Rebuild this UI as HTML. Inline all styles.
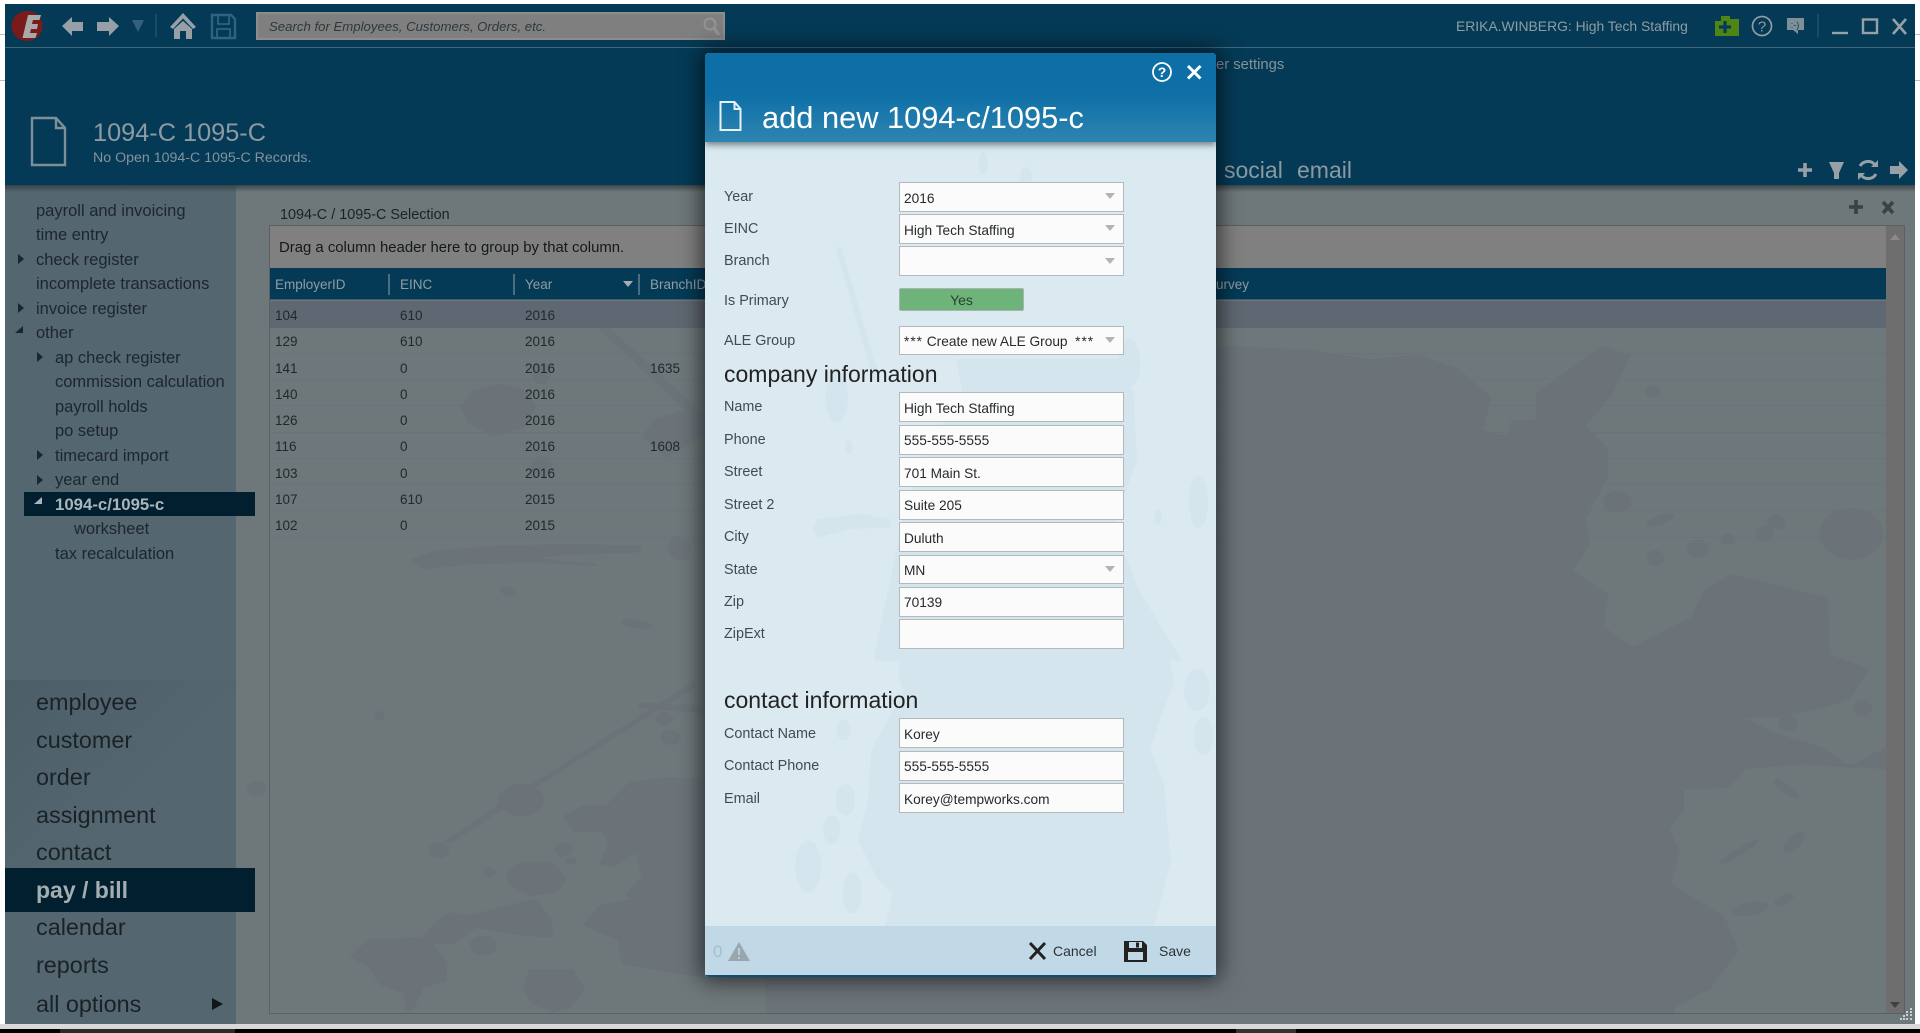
<!DOCTYPE html>
<html><head><meta charset="utf-8"><title>1094-C 1095-C</title>
<style>
html,body{margin:0;padding:0;width:1920px;height:1033px;overflow:hidden;background:#fff;font-family:"Liberation Sans",sans-serif}
div,span{position:absolute;white-space:nowrap;box-sizing:border-box}
svg{position:absolute;overflow:visible}
.n{font-size:16.5px;line-height:24px;height:24px;color:#1c262c;margin-top:1px}
.m{font-size:23.4px;line-height:36px;height:36px;left:36px;color:#1a2226}
.g{font-size:13.5px;line-height:20px;height:20px;color:#1f282c;margin-top:1px}
.h{font-size:13.5px;line-height:20px;height:20px;top:275px;color:#8f9ca3}
.l{font-size:14.4px;line-height:20px;height:20px;left:724px;color:#414c52;margin-top:1px}
.f{left:899px;width:225px;background:#fbfbfb;border:1.5px solid #b4b9bc;font-size:13.7px;color:#252a2c;padding-left:4px;line-height:31px}
.a{left:205px;top:0;width:0;height:0;border-left:5px solid transparent;border-right:5px solid transparent;border-top:6px solid #b0b4b6}
.r{left:269px;width:1617px;height:26.3px;border-bottom:1px solid #69737a}
.sec{left:724px;font-size:23px;line-height:30px;height:30px;color:#222}
</style></head><body>

<!-- window chrome strips -->
<div style="left:0;top:1029px;width:1920px;height:4px;background:#000"></div>
<div style="left:60px;top:1029px;width:175px;height:4px;background:#2b2b2b"></div>
<div style="left:1236px;top:1029px;width:60px;height:4px;background:#333"></div>
<div style="left:0;top:1024px;width:1920px;height:5px;background:#d9d9d9"></div>
<div style="left:0;top:34px;width:5px;height:1px;background:#bbb"></div>
<div style="left:0;top:80px;width:5px;height:1px;background:#bbb"></div>
<div style="left:1915px;top:34px;width:5px;height:1px;background:#bbb"></div>
<div style="left:1915px;top:80px;width:5px;height:1px;background:#bbb"></div>

<!-- header -->
<div style="left:5px;top:4px;width:1910px;height:181px;background:#053a56"></div>
<div style="left:5px;top:47px;width:1910px;height:1px;background:#40697f"></div>

<!-- main area -->
<div style="left:236px;top:185px;width:1679px;height:839px;background:#6e7779"></div>

<!-- sidebar -->
<div style="left:5px;top:185px;width:231px;height:839px;background:#546670"></div>
<div style="left:5px;top:680px;width:231px;height:344px;background:linear-gradient(135deg,#4c5f69,#546670 45%)"></div>

<!-- group panel -->
<div style="left:269px;top:226px;width:1617px;height:42px;background:#808080"></div>
<!-- grid header -->
<div style="left:269px;top:268px;width:1617px;height:32px;background:#053a56;border-bottom:1px solid #3b5f72"></div>

<!-- splatter in main area -->
<svg style="left:0;top:0" width="1920" height="1033" viewBox="0 0 1920 1033">
<g fill="#6b7379" stroke="#6b7379" stroke-width="6" stroke-linejoin="round">
 <g transform="translate(1216,300) scale(.449,.4677)">
  <path d="M0,100L220,110L340,130L450,120L540,150L610,210L590,280L650,295L660,260L715,260L715,200L790,150L860,100L920,120L880,200L820,270L870,320L870,380L840,430L820,470L830,520L790,580L870,630L860,700L930,745L1060,680L1090,620L1150,590L1280,620L1360,640L1365,760L1450,790L1410,850L1350,870L1250,890L1160,890L1250,930L1350,960L1410,1000L1490,960L1490,1000L1300,990L1180,1000L1140,1040L1040,1045L1040,1090L1005,1130L1030,1180L1010,1250L1130,1320L1160,1390L1100,1470L1020,1510L1020,1525L-1000,1525L-1000,1445Z"/>
  <ellipse cx="1415" cy="500" rx="68" ry="52"/><ellipse cx="893" cy="432" rx="28" ry="20"/><ellipse cx="1072" cy="532" rx="22" ry="16"/><ellipse cx="978" cy="552" rx="17" ry="14"/><ellipse cx="1248" cy="475" rx="18" ry="13"/><ellipse cx="1222" cy="500" rx="17" ry="14"/><ellipse cx="1140" cy="512" rx="13" ry="9"/><ellipse cx="973" cy="195" rx="15" ry="11"/><ellipse cx="1440" cy="872" rx="18" ry="14"/><ellipse cx="1275" cy="905" rx="18" ry="14"/><ellipse cx="990" cy="470" rx="30" ry="7" transform="rotate(-20 990 470)"/><ellipse cx="1190" cy="1302" rx="38" ry="11" transform="rotate(-8 1190 1302)"/><ellipse cx="1287" cy="1160" rx="26" ry="11" transform="rotate(-40 1287 1160)"/><ellipse cx="1270" cy="1045" rx="30" ry="7" transform="rotate(35 1270 1045)"/><ellipse cx="1265" cy="1282" rx="20" ry="8" transform="rotate(-25 1265 1282)"/><ellipse cx="1165" cy="1180" rx="46" ry="5" transform="rotate(-30 1165 1180)"/>
 </g>
 <g transform="translate(236,530) scale(.3333)">
  <path d="M525,90L600,65L800,50L1000,45L1215,50L1215,65L1000,70L880,85L1080,105L900,95L700,100L560,115Z"/>
  <path d="M1405,750L1290,745L1180,760L1110,830L1040,830L985,860L1015,905L1100,900L1120,940L1095,1000L1130,1010L1200,965L1220,1040L1175,1090L1190,1110L1090,1130L1045,1185L1150,1230L1160,1300L1400,1340Z"/>
  <path d="M345,1280L400,1230L560,1225L590,1190L640,1150L700,1160L810,1130L900,1110L945,1170L950,1220L860,1215L720,1190L650,1240L590,1240L630,1300L630,1350L560,1370L530,1440L510,1440L510,1390L430,1360L400,1310Z"/>
  <path d="M815,1030L850,1000L950,1000L990,1045L960,1085L880,1095L820,1060Z"/>
  <path d="M880,1320L1010,1320L1045,1380L1000,1430L950,1445L890,1420L865,1380Z"/>
  <ellipse cx="855" cy="810" rx="65" ry="45"/><ellipse cx="610" cy="960" rx="28" ry="21"/><ellipse cx="742" cy="1247" rx="38" ry="26"/><ellipse cx="982" cy="958" rx="24" ry="19"/><ellipse cx="760" cy="1027" rx="16" ry="12"/><ellipse cx="1305" cy="622" rx="27" ry="21"/><ellipse cx="1285" cy="566" rx="25" ry="17"/><ellipse cx="1203" cy="282" rx="45" ry="10" transform="rotate(8 1203 282)"/><ellipse cx="815" cy="183" rx="22" ry="11" transform="rotate(20 815 183)"/><ellipse cx="62" cy="775" rx="26" ry="20"/><ellipse cx="430" cy="557" rx="14" ry="11"/><ellipse cx="1005" cy="992" rx="14" ry="9"/><ellipse cx="1330" cy="55" rx="30" ry="35" transform="rotate(-30 1330 55)"/>
  <path d="M630,935L800,820L805,830L640,940Z"/><path d="M880,770L1370,460L1375,470L885,778Z"/><path d="M1210,520L1400,530L1400,548L1210,530Z"/>
 </g>
 <g transform="translate(260,260) scale(.3333)">
  <path d="M605,445L640,395L720,375L800,395L825,440L790,500L700,525L630,490Z"/>
  <ellipse cx="845" cy="340" rx="25" ry="30"/><ellipse cx="845" cy="620" rx="28" ry="28"/>
  <path d="M1020,205L1045,205L1335,470L1335,520L1220,590L1150,530L1185,480L1280,450Z"/>
 </g>
</g>
</svg>

<!-- rows -->
<div class="r" style="top:301px;background:#5f6872;border:0;height:27px"></div>
<div class="r" style="top:328px"></div><div class="r" style="top:354px"></div><div class="r" style="top:380px"></div><div class="r" style="top:407px"></div><div class="r" style="top:433px"></div><div class="r" style="top:459px"></div><div class="r" style="top:485px"></div><div class="r" style="top:512px"></div>

<!-- grid frame + scrollbar -->
<div style="left:1886px;top:226px;width:18px;height:787px;background:#6e6e6e"></div>
<div style="left:269px;top:225px;width:1636px;height:789px;border:1px solid #5b6063"></div>
<svg style="left:0;top:0" width="1920" height="1033">
 <path d="M1890,240h10l-5,-6z" fill="#8a8a8a"/>
 <path d="M1890,1002h10l-5,6z" fill="#3d4245"/>
 <path d="M389,274v21M514,274v21M639,274v21" stroke="#8ea0ab" stroke-width="1"/>
 <path d="M623,281h10l-5,6z" fill="#a5afb5"/>
 <g fill="#c8d0d4">
  <rect x="1910" y="1008" width="2" height="2"/><rect x="1910" y="1011" width="2" height="2"/><rect x="1910" y="1014" width="2" height="2"/><rect x="1910" y="1018" width="2" height="2"/><rect x="1906" y="1011" width="2" height="2"/><rect x="1906" y="1014" width="2" height="2"/><rect x="1906" y="1018" width="2" height="2"/><rect x="1903" y="1015" width="2" height="2"/><rect x="1903" y="1018" width="2" height="2"/><rect x="1900" y="1018" width="2" height="2"/>
 </g>
</svg>

<!-- panel text -->
<div style="left:280px;top:205px;font-size:14.4px;line-height:20px;color:#1b2225">1094-C / 1095-C Selection</div>
<div style="left:279px;top:238px;font-size:14.9px;line-height:20px;color:#13181a">Drag a column header here to group by that column.</div>

<span class="h" style="left:275px">EmployerID</span><span class="h" style="left:400px">EINC</span><span class="h" style="left:525px">Year</span><span class="h" style="left:650px">BranchID</span><span class="h" style="left:1216px">urvey</span>

<span class="g" style="left:275px;top:305px">104</span><span class="g" style="left:400px;top:305px">610</span><span class="g" style="left:525px;top:305px">2016</span>
<span class="g" style="left:275px;top:331px">129</span><span class="g" style="left:400px;top:331px">610</span><span class="g" style="left:525px;top:331px">2016</span>
<span class="g" style="left:275px;top:358px">141</span><span class="g" style="left:400px;top:358px">0</span><span class="g" style="left:525px;top:358px">2016</span><span class="g" style="left:650px;top:358px">1635</span>
<span class="g" style="left:275px;top:384px">140</span><span class="g" style="left:400px;top:384px">0</span><span class="g" style="left:525px;top:384px">2016</span>
<span class="g" style="left:275px;top:410px">126</span><span class="g" style="left:400px;top:410px">0</span><span class="g" style="left:525px;top:410px">2016</span>
<span class="g" style="left:275px;top:436px">116</span><span class="g" style="left:400px;top:436px">0</span><span class="g" style="left:525px;top:436px">2016</span><span class="g" style="left:650px;top:436px">1608</span>
<span class="g" style="left:275px;top:463px">103</span><span class="g" style="left:400px;top:463px">0</span><span class="g" style="left:525px;top:463px">2016</span>
<span class="g" style="left:275px;top:489px">107</span><span class="g" style="left:400px;top:489px">610</span><span class="g" style="left:525px;top:489px">2015</span>
<span class="g" style="left:275px;top:515px">102</span><span class="g" style="left:400px;top:515px">0</span><span class="g" style="left:525px;top:515px">2015</span>

<!-- header shadow -->
<div style="left:5px;top:185px;width:1910px;height:7px;background:linear-gradient(#2e3a40cc,#2e3a4000)"></div>

<!-- sidebar tree -->
<div style="left:24px;top:492px;width:231px;height:24px;background:#011f2f"></div>
<div style="left:5px;top:868px;width:250px;height:44px;background:#011f2f"></div>
<span class="n" style="left:36px;top:198px">payroll and invoicing</span>
<span class="n" style="left:36px;top:222px">time entry</span>
<span class="n" style="left:36px;top:247px">check register</span>
<span class="n" style="left:36px;top:271px">incomplete transactions</span>
<span class="n" style="left:36px;top:296px">invoice register</span>
<span class="n" style="left:36px;top:320px">other</span>
<span class="n" style="left:55px;top:345px">ap check register</span>
<span class="n" style="left:55px;top:369px">commission calculation</span>
<span class="n" style="left:55px;top:394px">payroll holds</span>
<span class="n" style="left:55px;top:418px">po setup</span>
<span class="n" style="left:55px;top:443px">timecard import</span>
<span class="n" style="left:55px;top:467px">year end</span>
<span class="n" style="left:55px;top:492px;color:#aab6bb;font-weight:bold;font-size:16.8px">1094-c/1095-c</span>
<span class="n" style="left:74px;top:516px">worksheet</span>
<span class="n" style="left:55px;top:541px">tax recalculation</span>

<svg style="left:0;top:0" width="260" height="1033">
 <g fill="#1c262c">
  <path d="M18,254l6,5l-6,5zM18,303l6,5l-6,5zM37,352l6,5l-6,5zM37,450l6,5l-6,5zM37,475l6,5l-6,5z"/>
  <path d="M23,326v7h-8z"/>
  <path d="M212,998l11,6l-11,6z" fill="#10161a"/>
 </g>
 <path d="M42,497v7h-8z" fill="#aab6bb"/>
</svg>

<span class="m" style="top:684px">employee</span>
<span class="m" style="top:722px">customer</span>
<span class="m" style="top:759px">order</span>
<span class="m" style="top:797px">assignment</span>
<span class="m" style="top:834px">contact</span>
<span class="m" style="top:872px;color:#a3aeb2;font-weight:bold;font-size:23px">pay / bill</span>
<span class="m" style="top:909px">calendar</span>
<span class="m" style="top:947px">reports</span>
<span class="m" style="top:986px">all options</span>

<!-- toolbar -->
<svg style="left:0;top:0" width="1920" height="190">
 <!-- logo -->
 <ellipse cx="27" cy="26" rx="15.5" ry="15" fill="#7a1b1b"/>
 <path d="M28,15h13l-1.5,5h-6.5l-1,4h6l-1,5h-6l-1,4h7l-1.5,5h-13z" fill="#a9a9a9"/>
 <!-- back / fwd -->
 <path d="M62,26l10,-9v5h11v9h-11v5z" fill="#96a0a6"/>
 <path d="M119,26l-10,-9v5h-12v9h12v5z" fill="#96a0a6"/>
 <path d="M132,20h12l-6,12z" fill="#33617a"/>
 <path d="M156,14v23" stroke="#2f5f78" stroke-width="1"/>
 <!-- home -->
 <path d="M170,27l13,-14l13,14l-3,2l-10,-10.5l-10,10.5z" fill="#96a0a6"/>
 <path d="M174,29l9,-8l9,8v10h-6v-8h-6v8h-6z" fill="#96a0a6"/>
 <!-- save -->
 <path d="M212,15h19l4,4v19h-23z" fill="none" stroke="#2e6480" stroke-width="2.4"/>
 <path d="M218,15v9h11v-9M217,38v-9h13v9" fill="none" stroke="#2e6480" stroke-width="1.8"/>
 <!-- doc page icon -->
 <path d="M32,118h24l9,10v37h-33z" fill="none" stroke="#7f8f97" stroke-width="2.4"/>
 <path d="M56,118v10h9" fill="none" stroke="#7f8f97" stroke-width="2.4"/>
 <!-- right icons -->
 <path d="M1715,21h6v-5h9v3h9v17h-24z" fill="#4f8512"/>
 <path d="M1725,21v12M1719,27h12" stroke="#053a56" stroke-width="3.2"/>
 <circle cx="1762" cy="26" r="9.5" fill="none" stroke="#8f9ca3" stroke-width="1.7"/>
 <text x="1762" y="31.5" font-size="15" font-family="Liberation Sans" text-anchor="middle" fill="#8f9ca3">?</text>
 <path d="M1787,18h17v12h-6v4l-5,-4h-6z" fill="#7e8f98"/>
 <text x="1795" y="28" font-size="9" font-family="Liberation Sans" text-anchor="middle" fill="#053a56">:-)</text>
 <path d="M1818,14v23" stroke="#2f5f78" stroke-width="1"/>
 <path d="M1832,33h16" stroke="#96a0a6" stroke-width="2.4"/>
 <rect x="1863" y="19.5" width="14" height="13.5" fill="none" stroke="#96a0a6" stroke-width="2.4"/>
 <path d="M1893,19l13,15M1906,19l-13,15" stroke="#96a0a6" stroke-width="2.6"/>
 <!-- lower tools -->
 <path d="M1805,163v14M1798,170h14" stroke="#96a0a6" stroke-width="3.6"/>
 <path d="M1829,162h15l-5,11v6l-5,0v-6z" fill="#96a0a6"/>
 <path d="M1860,166a9,9 0 0 1 15,-1M1876,174a9,9 0 0 1 -15,1" fill="none" stroke="#96a0a6" stroke-width="3"/>
 <path d="M1878,160v7h-7zM1858,180v-7h7z" fill="#96a0a6"/>
 <path d="M1908,170l-9,-9v5h-9v8h9v5z" fill="#96a0a6"/>
 <path d="M1856,200v14M1849,207h14" stroke="#3a4245" stroke-width="3.6"/>
 <path d="M1883,202l10,11M1893,202l-10,11" stroke="#3a4245" stroke-width="3.6"/>
</svg>

<!-- search -->
<div style="left:256px;top:12px;width:469px;height:28px;background:#7f7f7f;border:2px solid #8d8d8d;font-size:13.2px;font-style:italic;color:#2e383d;line-height:26px;padding-left:11px">Search for Employees, Customers, Orders, etc.</div>
<svg style="left:700px;top:14px" width="24" height="24"><circle cx="10" cy="10" r="5.5" fill="none" stroke="#949494" stroke-width="2"/><path d="M14,14l5,7" stroke="#949494" stroke-width="3"/></svg>

<div style="left:1456px;top:16px;font-size:13.9px;line-height:20px;color:#8f9ca3">ERIKA.WINBERG: High Tech Staffing</div>
<div style="left:1216px;top:55px;font-size:14.8px;line-height:20px;color:#84939b">er settings</div>
<div style="left:93px;top:118px;font-size:25.3px;line-height:30px;color:#8d9aa1">1094-C 1095-C</div>
<div style="left:93px;top:148px;font-size:14.2px;line-height:20px;color:#84929b">No Open 1094-C 1095-C Records.</div>
<div style="left:1224px;top:153px;font-size:23px;line-height:34px;color:#8c99a1">social</div>
<div style="left:1297px;top:153px;font-size:23px;line-height:34px;color:#8c99a1">email</div>

<!-- DIALOG -->
<div style="left:705px;top:53px;width:511px;height:924px;border-radius:4px;background:#dbe9f1;box-shadow:0 0 22px 4px rgba(0,0,0,.6);overflow:hidden">
 <svg style="left:-705px;top:-53px" width="1920" height="1033">
  <g fill="#d5e5ee" stroke="#d5e5ee" stroke-width="6" stroke-linejoin="round">
   <g transform="translate(700,360) scale(.338,.333)">
    <path d="M760,0L780,100L650,300L600,500L520,880L520,900L1420,900L1300,700L1220,500L1290,300L1280,100L1240,0Z"/>
    <ellipse cx="405" cy="110" rx="30" ry="75"/><ellipse cx="440" cy="262" rx="7" ry="18"/>
    <path d="M335,510L350,480L470,465L560,480L560,500L440,505L350,530Z"/>
    <ellipse cx="1475" cy="425" rx="25" ry="75"/><ellipse cx="1355" cy="470" rx="8" ry="20"/>
   </g>
   <g transform="translate(700,650) scale(.338,.333)">
    <path d="M600,0L620,100L560,210L510,300L500,450L470,570L530,690L575,730L550,830L1340,830L1390,640L1380,520L1370,400L1330,300L1360,200L1400,100L1380,0Z"/>
    <ellipse cx="320" cy="650" rx="35" ry="75"/><ellipse cx="450" cy="730" rx="25" ry="60"/><ellipse cx="430" cy="450" rx="25" ry="45"/><ellipse cx="390" cy="540" rx="22" ry="40"/><ellipse cx="425" cy="240" rx="18" ry="28"/><ellipse cx="610" cy="70" rx="18" ry="50"/>
    <ellipse cx="1470" cy="120" rx="35" ry="60"/><ellipse cx="1490" cy="260" rx="25" ry="55"/>
   </g>
   <g transform="translate(700,40) scale(.338,.333)">
    <ellipse cx="838" cy="370" rx="11" ry="30"/><ellipse cx="965" cy="410" rx="15" ry="25"/>
    <ellipse cx="1270" cy="970" rx="30" ry="70"/><ellipse cx="905" cy="790" rx="45" ry="20"/>
    <path d="M405,625L415,625L530,1020L515,1020Z"/>
   </g>
  </g>
 </svg>
 <div style="left:0;top:0;width:511px;height:89px;background:linear-gradient(#0d6fa6 0,#0d6fa6 45%,#2e84b1 100%);box-shadow:0 3px 6px rgba(30,50,60,.55)"></div>
 <div style="left:0;top:873px;width:511px;height:51px;background:#c1d9e7;border-bottom:2px solid #0f4f72"></div>
</div>

<svg style="left:0;top:0" width="1920" height="1033">
 <path d="M720.5,102h14l6,7v21h-20z" fill="none" stroke="#e8f2f7" stroke-width="2"/>
 <path d="M734.5,102v7h6" fill="none" stroke="#e8f2f7" stroke-width="2"/>
 <circle cx="1162" cy="72" r="9" fill="none" stroke="#fff" stroke-width="1.8"/>
 <text x="1162" y="77" font-size="14" font-weight="bold" font-family="Liberation Sans" text-anchor="middle" fill="#fff">?</text>
 <path d="M1188,66l12.5,12.5M1200.5,66l-12.5,12.5" stroke="#fff" stroke-width="3"/>
 <!-- footer -->
 <path d="M739,942l11,19h-22z" fill="#98a6ae"/>
 <path d="M739,948v7M739,957v2" stroke="#c1d9e7" stroke-width="1.6"/>
 <path d="M1030,943l15,16M1045,943l-15,16" stroke="#222" stroke-width="3"/>
 <path d="M1124,941h19l4,4v17h-23z" fill="#222"/>
 <rect x="1129" y="942" width="13" height="6" fill="#c1d9e7"/><rect x="1136" y="942.5" width="3" height="5" fill="#222"/>
 <rect x="1128" y="952" width="15" height="8" fill="#c1d9e7"/>
</svg>

<div style="left:762px;top:99px;font-size:30.8px;line-height:38px;color:#fff">add new 1094-c/1095-c</div>

<span class="l" style="top:186px">Year</span>
<div class="f" style="top:182px;height:30px;line-height:32px">2016<span class="a" style="top:10px"></span></div>
<span class="l" style="top:218px">EINC</span>
<div class="f" style="top:214px;height:30px;line-height:32px">High Tech Staffing<span class="a" style="top:10px"></span></div>
<span class="l" style="top:250px">Branch</span>
<div class="f" style="top:246px;height:30px"><span class="a" style="top:11px"></span></div>
<span class="l" style="top:290px">Is Primary</span>
<div style="left:899px;top:288px;width:125px;height:23px;background:#6db37a;border:1.5px solid #aab3b3;border-radius:2px;text-align:center;font-size:14px;line-height:22px;color:#27412d">Yes</div>
<span class="l" style="top:330px">ALE Group</span>
<div class="f" style="top:326px;height:29px;line-height:29px"><span style="position:static;letter-spacing:1px">***</span> Create new ALE Group&nbsp; <span style="position:static;letter-spacing:1px">***</span><span class="a" style="top:10px"></span></div>

<div class="sec" style="top:359px">company information</div>

<span class="l" style="top:396px">Name</span><div class="f" style="top:392px;height:30px">High Tech Staffing</div>
<span class="l" style="top:429px">Phone</span><div class="f" style="top:425px;height:30px;line-height:29px">555-555-5555</div>
<span class="l" style="top:461px">Street</span><div class="f" style="top:457px;height:30px">701 Main St.</div>
<span class="l" style="top:494px">Street 2</span><div class="f" style="top:490px;height:30px;line-height:29px">Suite 205</div>
<span class="l" style="top:526px">City</span><div class="f" style="top:522px;height:30px">Duluth</div>
<span class="l" style="top:559px">State</span><div class="f" style="top:555px;height:29px;line-height:30px">MN<span class="a" style="top:10px"></span></div>
<span class="l" style="top:591px">Zip</span><div class="f" style="top:587px;height:30px;line-height:29px">70139</div>
<span class="l" style="top:623px">ZipExt</span><div class="f" style="top:619px;height:30px"></div>

<div class="sec" style="top:685px">contact information</div>

<span class="l" style="top:723px">Contact Name</span><div class="f" style="top:718px;height:30px">Korey</div>
<span class="l" style="top:755px">Contact Phone</span><div class="f" style="top:751px;height:30px;line-height:29px">555-555-5555</div>
<span class="l" style="top:788px">Email</span><div class="f" style="top:783px;height:30px">Korey@tempworks.com</div>

<div style="left:713px;top:941px;font-size:17px;line-height:22px;color:#a7bec9">0</div>
<div style="left:1053px;top:941px;font-size:14px;line-height:20px;color:#2b3236">Cancel</div>
<div style="left:1159px;top:941px;font-size:14px;line-height:20px;color:#2b3236">Save</div>

</body></html>
